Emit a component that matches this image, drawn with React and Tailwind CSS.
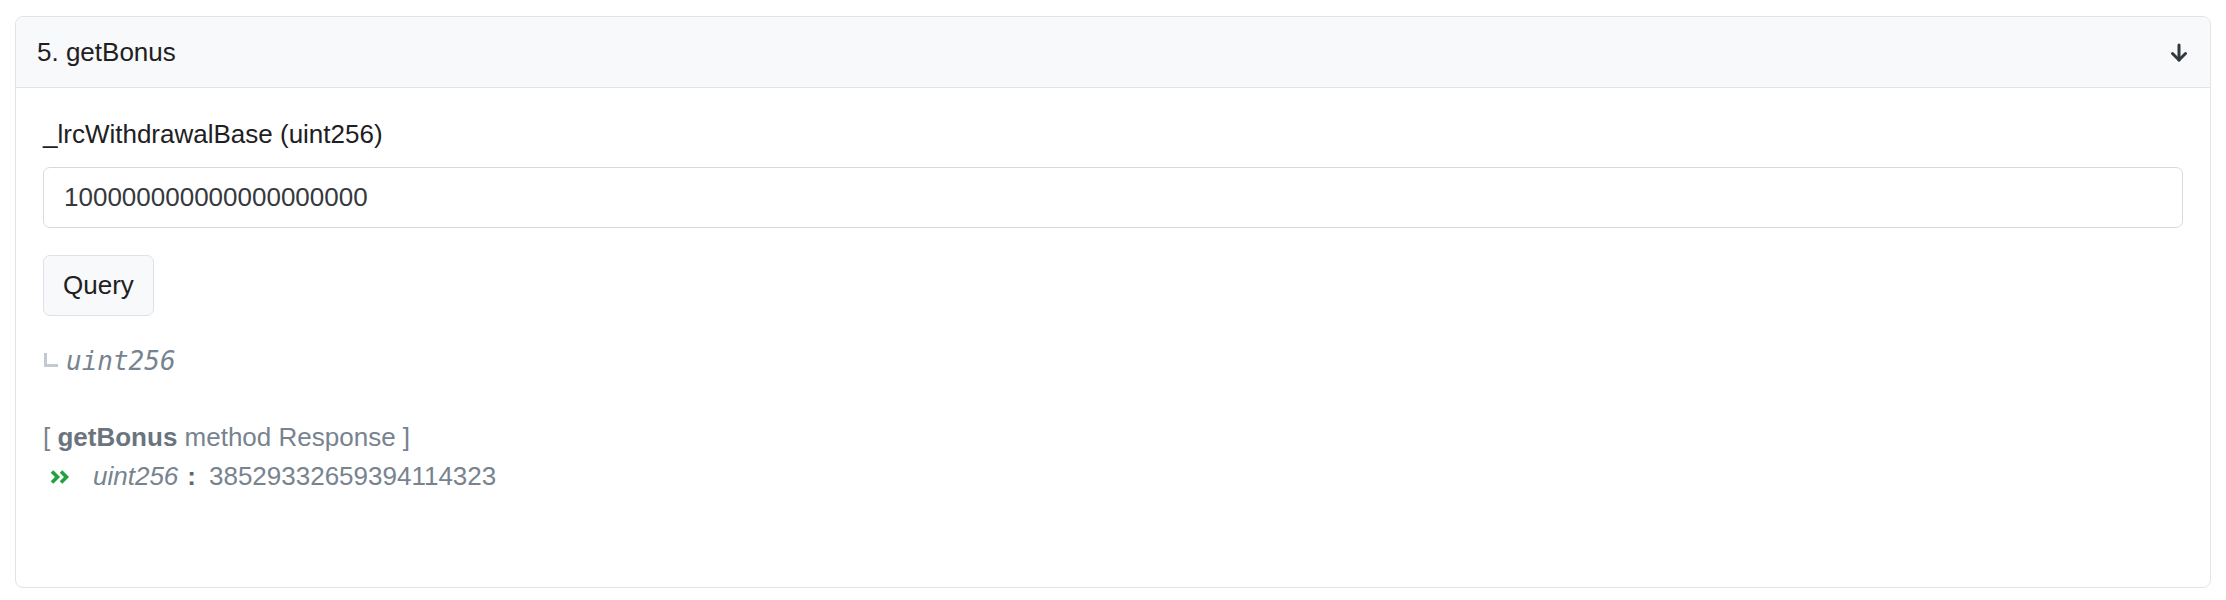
export default function App() {
  return (
    <div className="min-h-[600px] bg-white px-[15px] pt-4 pb-[15px] font-['Liberation_Sans',Arial,sans-serif] text-[26px] leading-[39px]">
      <div className="rounded-[8px] border border-[#e2e4e7] overflow-hidden">

        {/* Header */}
        <div className="flex items-center justify-between bg-[#f8f9fa] border-b border-[#e2e4e7] pl-[21px] pr-[22px] pt-4 pb-[15px] text-[#1e2022]">
          <span>5. getBonus</span>
          <svg width="18" height="19" viewBox="0 0 18 19" fill="none"
            stroke="#33383d" strokeWidth="3" strokeLinecap="round" strokeLinejoin="round">
            <path d="M9 2v15" />
            <path d="M2.5 10.5 9 17l6.5-6.5" />
          </svg>
        </div>

        {/* Body */}
        <div className="px-[27px] pt-[27px] pb-[91px]">
          <div className="text-[#1e2022]">_lrcWithdrawalBase (uint256)</div>
          <input
            readOnly
            value="100000000000000000000"
            className="mt-[13px] block w-full h-[61px] rounded-[7px] border border-[#d5dae2] bg-white px-5 text-[#35393e] outline-none"
          />
          <button className="mt-[27px] block h-[61px] rounded-[7px] border border-[#dee2e6] bg-[#f8f9fa] px-[19px] text-[#1e2022]">
            Query
          </button>

          <div className="mt-[26px] flex items-center text-[#77838f]">
            <span className="ml-px mr-[8px] mt-[-3px] inline-block w-[14px] h-[14px] border-l-[3px] border-b-[3px] border-[#c3c9d1]" />
            <i className="font-['DejaVu_Sans_Mono',monospace]">uint256</i>
          </div>

          <div className="mt-[37px] text-[#77838f]">
            [ <b className="text-[#6b747e]">getBonus</b> method Response ]
          </div>
          <div className="flex items-center text-[#77838f]">
            <svg className="ml-[7px] mr-[23px]" width="20" height="14" viewBox="0 0 20 14" fill="none"
              stroke="#22a13f" strokeWidth="3.6" strokeLinejoin="miter">
              <path d="M2 1.5 7.5 7 2 12.5" />
              <path d="M11 1.5 16.5 7 11 12.5" />
            </svg>
            <i>uint256</i>
            <b className="ml-[9px] text-[#5e6670]">:</b>
            <span className="ml-[13px]">38529332659394114323</span>
          </div>
        </div>
      </div>
    </div>
  )
}
